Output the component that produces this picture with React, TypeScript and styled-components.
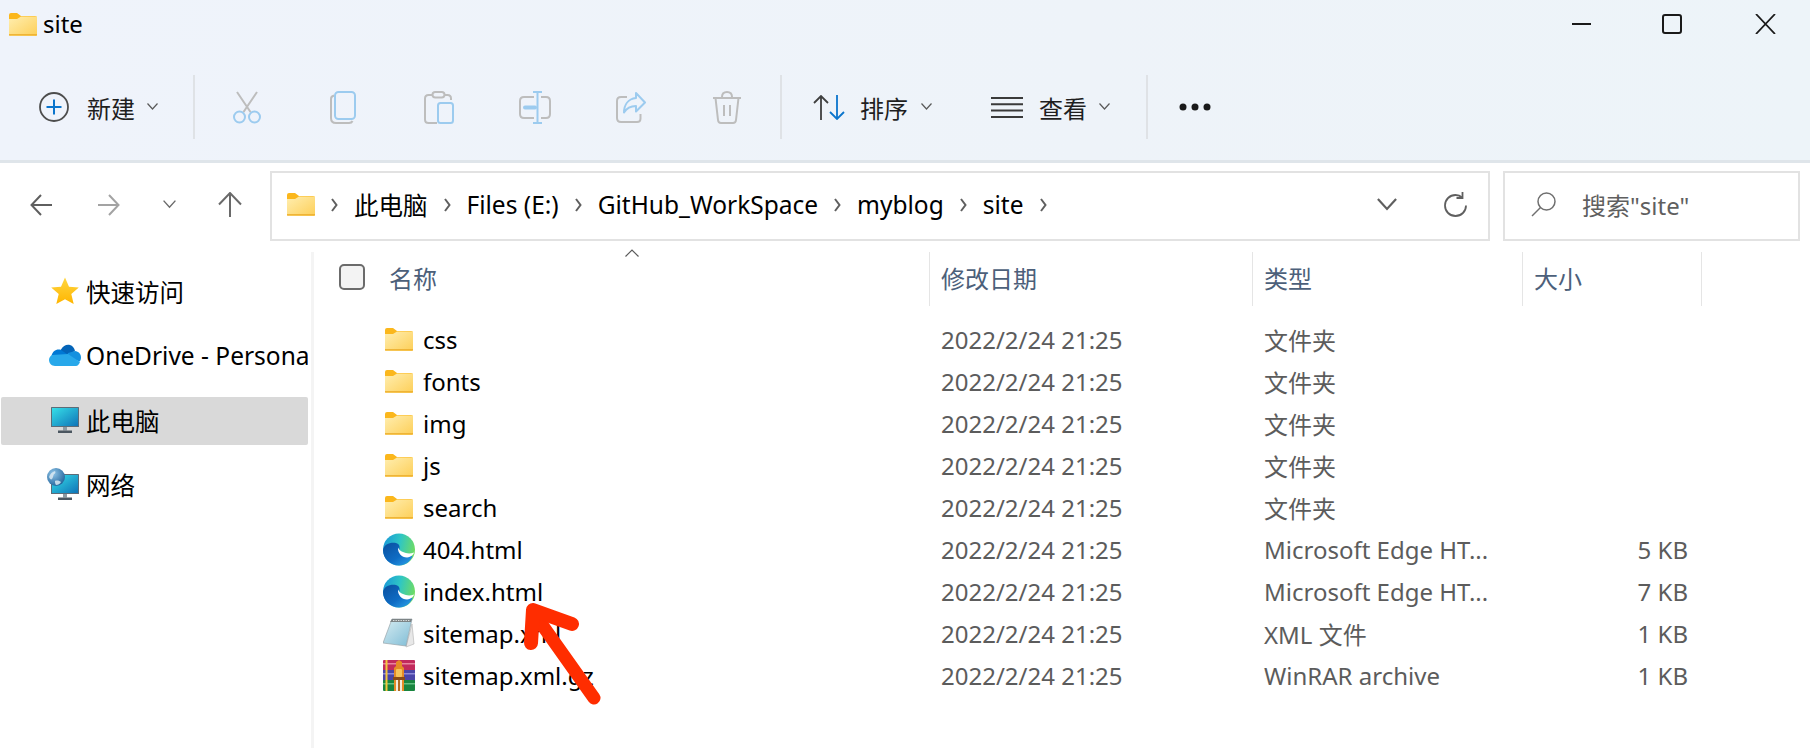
import React from 'react';
import styled, { createGlobalStyle } from 'styled-components';

const GlobalStyle = createGlobalStyle`
  html, body {
    margin: 0;
    padding: 0;
    background: #fff;
    font-family: "Noto Sans", "Noto Sans CJK SC", sans-serif;
  }
  * { box-sizing: border-box; }
`;

const FolderIcon = ({ id = 'f' }: { id?: string }) => (
  <svg width="28" height="23" viewBox="0 0 28 23">
    <defs>
      <linearGradient id={id} x1="0" y1="0" x2="1" y2="1">
        <stop offset="0" stopColor="#ffeeb0" />
        <stop offset="1" stopColor="#fdcf58" />
      </linearGradient>
    </defs>
    <path d="M0 2a2 2 0 0 1 2-2h6l4 3h14a2 2 0 0 1 2 2v16a2 2 0 0 1-2 2H2a2 2 0 0 1-2-2z" fill="#fbb71c" />
    <path d="M0 6h8l4-2.500h16V21a2 2 0 0 1-2 2H2a2 2 0 0 1-2-2z" fill={`url(#${id})`} />
    <path d="M0 21.800h28" stroke="#eeb030" strokeWidth="1.400" />
  </svg>
);

const EdgeIcon = ({ id }: { id: string }) => (
  <svg width="33" height="33" viewBox="0 0 32 32">
    <defs>
      <linearGradient id={`${id}a`} x1="0" y1="0.300" x2="1" y2="0.500">
        <stop offset="0" stopColor="#1a9ad8" />
        <stop offset="0.500" stopColor="#2fc6c4" />
        <stop offset="1" stopColor="#70dc62" />
      </linearGradient>
      <linearGradient id={`${id}b`} x1="0" y1="0" x2="0.900" y2="1">
        <stop offset="0" stopColor="#0a4f9e" />
        <stop offset="0.600" stopColor="#0f6cc4" />
        <stop offset="1" stopColor="#2aa0e8" />
      </linearGradient>
    </defs>
    <circle cx="16" cy="16" r="16" fill={`url(#${id}a)`} />
    <path d="M0 16.500C1 11 7 8.500 13 9.500c2.500.5 4 2.500 3.500 5.500-.5 2 0 4 1.500 5.500 2.500 1.500 6 2 11.500 2C27 28.500 22 32 16 32 7 32 0 25 0 16.500z" fill={`url(#${id}b)`} />
    <path d="M15 14c-.5 5 3.500 10 9 10 2 0 4-1 5.500-2.500 1-1 1.500-2 1.500-2.500-4 1.500-8 1-11-.5-2.500-1-4-2.500-5-4.500z" fill="#fff" />
  </svg>
);

const NotepadIcon = () => (
  <svg width="32" height="30" viewBox="0 0 32 30">
    <defs>
      <linearGradient id="np" x1="0" y1="0" x2="1" y2="1">
        <stop offset="0" stopColor="#d8edf2" />
        <stop offset="1" stopColor="#7ebcd6" />
      </linearGradient>
    </defs>
    <path d="M29 6l2 20-8 3z" fill="#e8e8e8" stroke="#b0b0b0" strokeWidth="0.600" />
    <path d="M9 1h20l-6 27L0 25z" fill="url(#np)" stroke="#9aa5aa" strokeWidth="0.700" />
    <path d="M9 1h20l-1 3H7z" fill="#7d8486" />
    <path d="M10 2.500h17" stroke="#d9dcdc" strokeWidth="1.200" strokeDasharray="1.400 1.100" />
  </svg>
);

const RarIcon = () => (
  <svg width="32" height="31" viewBox="0 0 32 31">
    <rect x="0" y="0" width="32" height="11" rx="1" fill="#c22a5c" />
    <rect x="0" y="10" width="32" height="11" fill="#4a45a8" />
    <rect x="0" y="20" width="32" height="11" rx="1" fill="#19853f" />
    <rect x="0" y="3" width="32" height="1.500" fill="#e8849f" />
    <rect x="0" y="13" width="32" height="1.500" fill="#8e8ad8" />
    <rect x="0" y="23" width="32" height="1.500" fill="#63c083" />
    <rect x="2.500" y="0" width="2" height="31" fill="#f3c63a" />
    <path d="M11 31V8l2-2V2l3-2 3 2v4l2 2v23z" fill="#e58b26" />
    <rect x="13" y="9" width="6" height="8" rx="1" fill="#f6c35a" />
    <rect x="10" y="17" width="12" height="3" fill="#8a4b17" />
    <rect x="13" y="20" width="6" height="11" fill="#f2ecdc" />
    <rect x="15" y="20" width="2" height="11" fill="#b46a22" />
  </svg>
);

const StarIcon = () => (
  <svg width="28" height="28" viewBox="0 0 28 28">
    <defs>
      <linearGradient id="star" x1="0" y1="0" x2="0" y2="1">
        <stop offset="0" stopColor="#ffd640" />
        <stop offset="1" stopColor="#ffb500" />
      </linearGradient>
    </defs>
    <path d="M14 .500l4 9.300 9.800.800-7.500 6.500 2.400 10L14 22.200 5.300 27.100l2.400-10L.200 10.600 10 9.800z" fill="url(#star)" />
  </svg>
);

const OneDriveIcon = () => (
  <svg width="32" height="22" viewBox="0 0 32 22">
    <path d="M12 5.500C14 1.500 18 0 21 1c2.500.8 4.500 3 5 6L14 14 8 9z" fill="#0364b8" />
    <path d="M12 6c-4-1.500-9 1-9.500 6.500L6 17l12-7z" fill="#0078d4" />
    <path d="M26 7c3.500.3 6 3 6 6.500 0 1.500-.5 3-1.500 4L18 13l1-4z" fill="#1490df" />
    <path d="M3 11C1 12 0 14 0 16c0 3 2.500 6 6 6h21c1.500 0 3-1.500 4-4L19 10z" fill="#28a8ea" />
  </svg>
);

const MonitorIcon = ({ id }: { id: string }) => (
  <svg width="28" height="26" viewBox="0 0 28 26">
    <defs>
      <linearGradient id={id} x1="0" y1="0" x2="1" y2="1">
        <stop offset="0" stopColor="#36dfe8" />
        <stop offset="1" stopColor="#0f74b8" />
      </linearGradient>
    </defs>
    <rect x="0" y="0" width="28" height="20" fill="#5d6c78" rx="0.500" />
    <rect x="1" y="1" width="26" height="18" fill={`url(#${id})`} />
    <rect x="12" y="20" width="4" height="3.500" fill="#8d9aa3" />
    <rect x="7" y="23.500" width="14" height="2.500" fill="#4b5660" />
  </svg>
);

const GlobeIcon = () => (
  <svg width="18" height="18" viewBox="0 0 18 18">
    <defs>
      <radialGradient id="globe" cx="0.350" cy="0.300" r="0.800">
        <stop offset="0" stopColor="#8ec4e8" />
        <stop offset="1" stopColor="#1c5e96" />
      </radialGradient>
    </defs>
    <circle cx="9" cy="9" r="9" fill="url(#globe)" />
    <path d="M2 9c1-3 3-5 6-6 1 1 0 3-1 3-1 2-1 4-2 5-1 1-2 0-3-2zM8 13c2-1 5 0 6 1-1 2-3 3-5 3-1-1-1-3-1-4z" fill="#dbe9f2" opacity="0.850" />
  </svg>
);

const GrayStroke = '#bdbdbd';
const BlueStroke = '#9ccbef';

const CutIcon = () => (
  <svg width="30" height="33" viewBox="0 0 30 33" fill="none" strokeWidth="2">
    <path d="M5 1l13.500 20M25 1L11.500 21" stroke={GrayStroke} />
    <circle cx="7.500" cy="26" r="5.500" stroke={BlueStroke} />
    <circle cx="22.500" cy="26" r="5.500" stroke={BlueStroke} />
  </svg>
);

const CopyIcon = () => (
  <svg width="26" height="33" viewBox="0 0 26 33" fill="none" strokeWidth="2">
    <path d="M4 4.500C2 5 1 6.500 1 8v19c0 3 2 5 5 5h13c1.500 0 3-.8 3.500-2" stroke={GrayStroke} />
    <rect x="5" y="1" width="20" height="27" rx="3.500" stroke={BlueStroke} />
  </svg>
);

const PasteIcon = () => (
  <svg width="30" height="33" viewBox="0 0 30 33" fill="none" strokeWidth="2">
    <path d="M9 4H4.500C2.500 4 1 5.500 1 7.500V28.500C1 30.500 2.500 32 4.500 32H13M20 4h3.500c2 0 3.500 1.500 3.500 3.500V9" stroke={GrayStroke} />
    <rect x="8.500" y="1" width="12" height="5.500" rx="2.700" stroke={GrayStroke} />
    <rect x="14" y="12" width="15" height="20" rx="2.500" stroke={BlueStroke} />
  </svg>
);

const RenameIcon = () => (
  <svg width="32" height="33" viewBox="0 0 32 33" fill="none" strokeWidth="2">
    <path d="M15 6H5C2.500 6 1 7.500 1 10v13c0 2.500 1.500 4 4 4h10M22 6h5c2.500 0 4 1.500 4 4v13c0 2.500-1.500 4-4 4h-5" stroke={GrayStroke} />
    <path d="M14 1h9M18.500 1v31M14 32h9" stroke={BlueStroke} />
    <path d="M6 16.500h10" stroke={BlueStroke} strokeWidth="4" strokeLinecap="round" />
  </svg>
);

const ShareIcon = () => (
  <svg width="30" height="31" viewBox="0 0 30 31" fill="none" strokeWidth="2">
    <path d="M11 5H5C2.500 5 1 6.500 1 9v17c0 2.500 1.500 4 4 4h16c2 0 3.500-1.500 3.500-3.500V22" stroke={GrayStroke} />
    <path d="M20 1l9 9.500-9 9V14c-5 0-9 1.500-12 6.500C8 13 12 7 20 6z" stroke={BlueStroke} strokeLinejoin="round" />
  </svg>
);

const DeleteIcon = () => (
  <svg width="30" height="33" viewBox="0 0 30 33" fill="none" strokeWidth="2" stroke={GrayStroke}>
    <path d="M1 7h28M3.500 7l2.500 22c.2 2 1.500 3 3 3h12c1.500 0 2.800-1 3-3l2.500-22" />
    <path d="M10 6c0-3 2-5 5-5s5 2 5 5" />
    <path d="M12 14v11M18 14v11" />
  </svg>
);

const Caret = ({ color = '#5a5a5a', w = 11 }: { color?: string; w?: number }) => (
  <svg width={w} height={w * 0.640} viewBox="0 0 11 7" fill="none" stroke={color} strokeWidth="1.200">
    <path d="M.500.500l5 5.500 5-5.500" />
  </svg>
);

const CrumbArrow = () => (
  <svg width="7" height="14" viewBox="0 0 7 14" fill="none" stroke="#5f5f5f" strokeWidth="2">
    <path d="M1 1l4.500 6L1 13" />
  </svg>
);

const Page = styled.div`
  width: 1810px;
  height: 748px;
  position: relative;
  overflow: hidden;
  background: #fff;
  display: flex;
  flex-direction: column;
  color: #000;
`;

const Ribbon = styled.header`
  height: 163px;
  background: linear-gradient(90deg, #eff3fb 0%, #eef3f9 60%, #edf4f9 100%);
  border-bottom: 3px solid #dfe5ea;
`;

const TitleBar = styled.div`
  height: 75px;
  padding: 0 34px 27px 9px;
  display: flex;
  align-items: center;
  justify-content: space-between;
`;

const TitleGroup = styled.div`
  display: flex;
  align-items: center;
  gap: 6px;
  font-size: 24px;
  line-height: 30px;
`;

const WindowButtons = styled.div`
  display: flex;
  align-items: center;
  gap: 73px;
`;

const MinimizeGlyph = styled.svg`
  margin-right: -2px;
`;

const CommandBar = styled.div`
  height: 64px;
  padding-left: 39px;
  display: flex;
  align-items: center;
  color: #1f1f1f;
`;

const MenuButton = styled.div<{ $left?: number; $gap?: number }>`
  display: flex;
  align-items: center;
  margin-left: ${(p) => p.$left ?? 0}px;
  font-size: 24px;
  gap: ${(p) => p.$gap ?? 15}px;
`;

const MenuCaret = styled.span<{ $pull: number }>`
  display: flex;
  margin-left: -${(p) => p.$pull}px;
`;

const Divider = styled.div<{ $left: number }>`
  width: 2px;
  height: 64px;
  margin-left: ${(p) => p.$left}px;
  background: #dfe2e6;
`;

const IconGroup = styled.div`
  display: flex;
  margin: 0 5px 0 4px;
`;

const IconButton = styled.div`
  width: 96px;
  height: 64px;
  display: flex;
  align-items: center;
  justify-content: center;
`;

const NavBar = styled.div`
  height: 89px;
  padding: 8px 10px 11px 30px;
  display: flex;
  align-items: stretch;
`;

const NavButtons = styled.div`
  width: 240px;
  display: flex;
  align-items: center;
  padding-bottom: 3px;
`;

const NavSlot = styled.div<{ $w: number }>`
  width: ${(p) => p.$w}px;
  display: flex;
  justify-content: flex-start;
`;

const AddressBox = styled.div`
  width: 1220px;
  border: 2px solid #e2e2e2;
  padding: 0 21px 3px 15px;
  display: flex;
  align-items: center;
  gap: 16px;
  font-size: 24.5px;
`;

const Crumb = styled.span`
  white-space: nowrap;
`;

const AddressTools = styled.div`
  margin-left: auto;
  display: flex;
  align-items: center;
  gap: 47px;
`;

const SearchBox = styled.div`
  width: 297px;
  margin-left: 13px;
  border: 2px solid #e2e2e2;
  padding: 0 0 3px 26px;
  display: flex;
  align-items: center;
  gap: 26px;
  font-size: 24px;
  color: #5f5f5f;
`;

const Body = styled.div`
  flex: 1;
  display: grid;
  grid-template-columns: 314px 1fr;
  min-height: 0;
`;

const Sidebar = styled.nav`
  border-right: 3px solid #f4f4f4;
  padding: 8px 3px 0 1px;
`;

const NavRow = styled.div<{ $selected?: boolean; $top: number }>`
  height: 48px;
  margin-top: ${(p) => p.$top}px;
  padding: 0 0 2px 48px;
  display: flex;
  align-items: center;
  font-size: 24.5px;
  overflow: hidden;
  white-space: nowrap;
  border-radius: 2px;
  background: ${(p) => (p.$selected ? '#d9d9d9' : 'transparent')};
`;

const NavIcon = styled.span<{ $left?: number }>`
  width: 37px;
  flex: none;
  display: flex;
  align-items: center;
  padding-left: ${(p) => p.$left ?? 2}px;
`;

const NetworkWrap = styled.span`
  position: relative;
  display: block;
  width: 28px;
  height: 32px;
  padding-top: 6px;
  svg:last-child {
    position: absolute;
    left: -4px;
    top: 0;
  }
`;

const Details = styled.main`
  position: relative;
`;

const Columns = styled.div`
  display: grid;
  grid-template-columns: 615px 323px 270px 180px;
`;

const HeaderRow = styled(Columns)`
  height: 54px;
  margin-bottom: 12px;
  font-size: 24px;
  color: #4c607a;
`;

const HeaderCell = styled.div<{ $first?: boolean }>`
  display: flex;
  align-items: center;
  padding: 0 0 4px 11px;
  border-left: ${(p) => (p.$first ? 'none' : '1px solid #e5e5e5')};
  &:last-child {
    border-right: 1px solid #e5e5e5;
  }
`;

const NameHeader = styled(HeaderCell)`
  padding-left: 25px;
  gap: 24px;
`;

const CheckBox = styled.span`
  width: 26px;
  height: 26px;
  border: 2px solid #6b6b6b;
  border-radius: 5px;
  background: #f3f3f3;
`;

const SortCaret = styled.span`
  position: absolute;
  left: 311px;
  top: -3px;
  line-height: 0;
`;

const FileRow = styled(Columns)`
  height: 42px;
  align-items: center;
  font-size: 24px;
  color: #5c5c5c;
`;

const NameCell = styled.div`
  padding-left: 69px;
  display: flex;
  align-items: center;
  color: #000;
  white-space: nowrap;
`;

const FileIcon = styled.span`
  width: 40px;
  flex: none;
  display: flex;
  align-items: center;
  justify-content: center;
  padding-right: 8px;
`;

const DataCell = styled.div`
  padding-left: 12px;
  white-space: nowrap;
  overflow: hidden;
`;

const SizeCell = styled.div`
  text-align: right;
  padding-right: 14px;
`;

const Annotation = styled.svg`
  position: absolute;
  left: 520px;
  top: 600px;
`;

type FileEntry = { name: string; kind: 'folder' | 'edge' | 'note' | 'rar'; type: string; size?: string };

const files: FileEntry[] = [
  { name: 'css', kind: 'folder', type: '文件夹' },
  { name: 'fonts', kind: 'folder', type: '文件夹' },
  { name: 'img', kind: 'folder', type: '文件夹' },
  { name: 'js', kind: 'folder', type: '文件夹' },
  { name: 'search', kind: 'folder', type: '文件夹' },
  { name: '404.html', kind: 'edge', type: 'Microsoft Edge HT...', size: '5 KB' },
  { name: 'index.html', kind: 'edge', type: 'Microsoft Edge HT...', size: '7 KB' },
  { name: 'sitemap.xml', kind: 'note', type: 'XML 文件', size: '1 KB' },
  { name: 'sitemap.xml.gz', kind: 'rar', type: 'WinRAR archive', size: '1 KB' },
];

const fileIcon = (f: FileEntry, i: number) => {
  if (f.kind === 'folder') return <FolderIcon id={`row${i}`} />;
  if (f.kind === 'edge') return <EdgeIcon id={`edge${i}`} />;
  if (f.kind === 'note') return <NotepadIcon />;
  return <RarIcon />;
};

const crumbs = ['此电脑', 'Files (E:)', 'GitHub_WorkSpace', 'myblog', 'site'];

const App = () => {
  return (
    <Page>
      <GlobalStyle />
      <Ribbon>
        <TitleBar>
          <TitleGroup>
            <FolderIcon id="title" />
            site
          </TitleGroup>
          <WindowButtons>
            <MinimizeGlyph width="19" height="20" viewBox="0 0 19 20" stroke="#1a1a1a" strokeWidth="2">
              <path d="M0 10h19" />
            </MinimizeGlyph>
            <svg width="20" height="20" viewBox="0 0 20 20" fill="none" stroke="#1a1a1a" strokeWidth="2">
              <rect x="1" y="1" width="18" height="18" rx="2" />
            </svg>
            <svg width="21" height="20" viewBox="0 0 21 20" stroke="#1a1a1a" strokeWidth="1.800">
              <path d="M1 0l19 20M20 0L1 20" />
            </svg>
          </WindowButtons>
        </TitleBar>
        <CommandBar>
          <MenuButton $gap={18}>
            <svg width="30" height="30" viewBox="0 0 30 30" fill="none">
              <circle cx="15" cy="15" r="14" stroke="#4d4d4d" strokeWidth="1.800" />
              <path d="M15 7.500v15M7.500 15h15" stroke="#0a74cc" strokeWidth="2" />
            </svg>
            新建
            <MenuCaret $pull={6}><Caret /></MenuCaret>
          </MenuButton>
          <Divider $left={35} />
          <IconGroup>
            <IconButton><CutIcon /></IconButton>
            <IconButton><CopyIcon /></IconButton>
            <IconButton><PasteIcon /></IconButton>
            <IconButton><RenameIcon /></IconButton>
            <IconButton><ShareIcon /></IconButton>
            <IconButton><DeleteIcon /></IconButton>
          </IconGroup>
          <Divider $left={0} />
          <MenuButton $left={31}>
            <svg width="32" height="25" viewBox="0 0 32 25" fill="none" strokeWidth="1.800">
              <path d="M8 25V1M1 8l7-7 7 7" stroke="#3f3f3f" />
              <path d="M24 0v24M17 17l7 7 7-7" stroke="#0a74cc" />
            </svg>
            排序
            <MenuCaret $pull={2}><Caret /></MenuCaret>
          </MenuButton>
          <MenuButton $left={59} $gap={16}>
            <svg width="32" height="21" viewBox="0 0 32 21" stroke="#3a3a3a" strokeWidth="2">
              <path d="M0 1h32M0 7.300h32M0 13.600h32M0 20h32" />
            </svg>
            查看
            <MenuCaret $pull={4}><Caret /></MenuCaret>
          </MenuButton>
          <Divider $left={36} />
          <MenuButton $left={31}>
            <svg width="32" height="8" viewBox="0 0 32 8" fill="#1a1a1a">
              <circle cx="4" cy="4" r="3.500" />
              <circle cx="16" cy="4" r="3.500" />
              <circle cx="28" cy="4" r="3.500" />
            </svg>
          </MenuButton>
        </CommandBar>
      </Ribbon>
      <NavBar>
        <NavButtons>
          <NavSlot $w={68}>
            <svg width="22" height="22" viewBox="0 0 22 22" fill="none" stroke="#5f5f5f" strokeWidth="2">
              <path d="M22 11H2M11 1L1.500 11 11 21" />
            </svg>
          </NavSlot>
          <NavSlot $w={65}>
            <svg width="22" height="22" viewBox="0 0 22 22" fill="none" stroke="#a3a3a3" strokeWidth="2">
              <path d="M0 11h20M11 1l9.500 10L11 21" />
            </svg>
          </NavSlot>
          <NavSlot $w={55}>
            <Caret w={13} color="#6a6a6a" />
          </NavSlot>
          <NavSlot $w={24}>
            <svg width="24" height="25" viewBox="0 0 24 25" fill="none" stroke="#6a6a6a" strokeWidth="2">
              <path d="M12 25V2M1 12.500L12 1l11 11.500" />
            </svg>
          </NavSlot>
        </NavButtons>
        <AddressBox>
          <FolderIcon id="addr" />
          {crumbs.map((c) => (
            <React.Fragment key={c}>
              <CrumbArrow />
              <Crumb>{c}</Crumb>
            </React.Fragment>
          ))}
          <CrumbArrow />
          <AddressTools>
            <Caret w={20} color="#5f5f5f" />
            <svg width="23" height="25" viewBox="0 0 23 25" fill="none" stroke="#5f5f5f" strokeWidth="1.800">
              <path d="M18 5.500C16 3.500 14 3 11.500 3 5.700 3 1 7.500 1 13.500S5.700 24 11.500 24 22 19.500 22 13.500" />
              <path d="M18.500 0v6h-6" />
            </svg>
          </AddressTools>
        </AddressBox>
        <SearchBox>
          <svg width="25" height="25" viewBox="0 0 25 25" fill="none" stroke="#6f6f6f" strokeWidth="1.500">
            <circle cx="15.500" cy="9.500" r="8.500" />
            <path d="M9.500 15.500L1 24" />
          </svg>
          搜索"site"
        </SearchBox>
      </NavBar>
      <Body>
        <Sidebar>
          <NavRow $top={8}>
            <NavIcon><StarIcon /></NavIcon>快速访问
          </NavRow>
          <NavRow $top={16}>
            <NavIcon $left={0}><OneDriveIcon /></NavIcon>OneDrive - Personal
          </NavRow>
          <NavRow $selected $top={17}>
            <NavIcon><MonitorIcon id="pc" /></NavIcon>此电脑
          </NavRow>
          <NavRow $top={16}>
            <NavIcon>
              <NetworkWrap>
                <MonitorIcon id="net" />
                <GlobeIcon />
              </NetworkWrap>
            </NavIcon>
            网络
          </NavRow>
        </Sidebar>
        <Details>
          <HeaderRow>
            <NameHeader $first>
              <CheckBox />
              名称
            </NameHeader>
            <HeaderCell>修改日期</HeaderCell>
            <HeaderCell>类型</HeaderCell>
            <HeaderCell>大小</HeaderCell>
          </HeaderRow>
          <SortCaret>
            <svg width="14" height="8" viewBox="0 0 14 8" fill="none" stroke="#5a5a5a" strokeWidth="1.200">
              <path d="M.500 7.500L7 1l6.500 6.500" />
            </svg>
          </SortCaret>
          {files.map((f, i) => (
            <FileRow key={f.name}>
              <NameCell>
                <FileIcon>{fileIcon(f, i)}</FileIcon>
                {f.name}
              </NameCell>
              <DataCell>2022/2/24 21:25</DataCell>
              <DataCell>{f.type}</DataCell>
              <SizeCell>{f.size}</SizeCell>
            </FileRow>
          ))}
        </Details>
      </Body>
      <Annotation width="90" height="110" viewBox="0 0 90 110" fill="none" stroke="#ff2d00" strokeLinecap="round" strokeLinejoin="round">
        <path d="M13 12L74 98" strokeWidth="13" />
        <path d="M11 43L13 10l39 14" strokeWidth="14" />
      </Annotation>
    </Page>
  );
};

export default App;
